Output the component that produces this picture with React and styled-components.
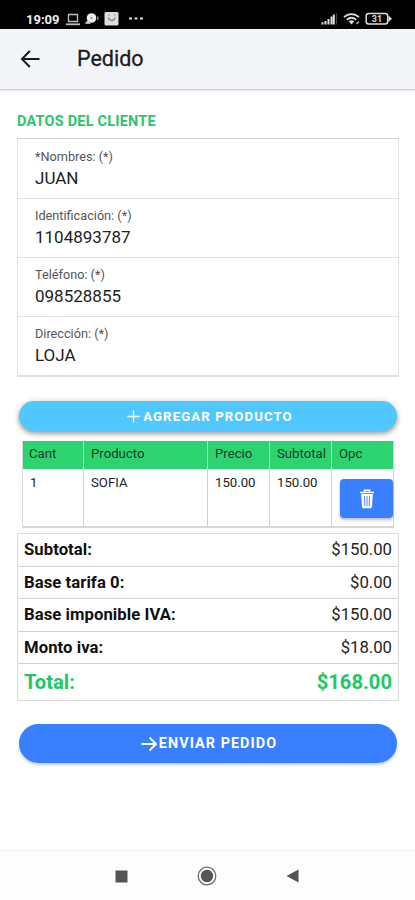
import React from 'react';
import styled, {createGlobalStyle} from 'styled-components';

const fields = [
	{label: '*Nombres: (*)', value: 'JUAN'},
	{label: 'Identificación: (*)', value: '1104893787'},
	{label: 'Teléfono: (*)', value: '098528855'},
	{label: 'Dirección: (*)', value: 'LOJA'},
];

const totals = [
	{label: 'Subtotal:', value: '$150.00'},
	{label: 'Base tarifa 0:', value: '$0.00'},
	{label: 'Base imponible IVA:', value: '$150.00'},
	{label: 'Monto iva:', value: '$18.00'},
];

const StatusBar = () => {
	return (
		<Status>
			<Clock>19:09</Clock>
			<svg width="81" height="16" viewBox="0 0 81 16">
				<path d="M2.5 2.5h9v7h-9z" fill="none" stroke="#bbb" strokeWidth="1.4" />
				<path d="M0 12.3h14" stroke="#bbb" strokeWidth="1.8" />
				<circle cx="25.5" cy="6" r="4.8" fill="#eee" />
				<circle cx="25.5" cy="6" r="1" fill="#777" />
				<path d="M22 8.5l-2.5 2.8h5" fill="#ccc" stroke="#ccc" />
				<path d="M31.8 4.5v3.5" stroke="#999" strokeWidth="1.3" />
				<rect x="38.5" y="0" width="14" height="13.5" rx="1.5" fill="#ddd" />
				<path d="M42 3h1.5M48 3h1.5" stroke="#888" />
				<path d="M42.5 5.5c.5 4 6 4 6.5 0" fill="none" stroke="#888" strokeWidth="1.4" />
				<path d="M63 6.5h3M68.5 6.5h3M74 6.5h3" stroke="#ddd" strokeWidth="2" />
			</svg>
			<Signals width="72" height="16" viewBox="0 0 72 16">
				<path d="M1.5 12.5V10.3M4.5 12.5V9M7.5 12.5V7M10.5 12.5V4.5M12.8 12.5V2.5" stroke="#ddd" strokeWidth="2" />
				<path d="M15.5 12.5V1" stroke="#444" strokeWidth="1" />
				<path d="M23 5.2c4.5-4.2 10.5-4.2 15 0M25.8 7.8c3-2.6 6.5-2.6 9.4 0" fill="none" stroke="#ddd" strokeWidth="1.8" />
				<path d="M27.8 9.3q2.7-2 5.4 0L30.5 12.6z" fill="#ddd" />
				<path d="M35.5 12l2.5-2.5" stroke="#bbb" strokeWidth="1.5" />
				<rect x="45.2" y="1.5" width="21.5" height="10.6" rx="2.5" fill="none" stroke="#ddd" strokeWidth="1.5" />
				<path d="M67.5 3.5l3.5 3.3-3.5 3.3z" fill="#ddd" />
				<text x="56" y="10" textAnchor="middle">31</text>
			</Signals>
		</Status>
	)
}

const App = () => {
	return (
		<Screen>
			<GlobalStyle />
			<StatusBar />
			<Header>
				<svg width="20" height="18" viewBox="0 0 20 18" fill="none" stroke="#15171a" strokeWidth="2">
					<path d="M9.8 1L2 9l7.8 8M2 9h17.5" />
				</svg>
				<Title>Pedido</Title>
			</Header>
			<Content>
				<SectionLabel>DATOS DEL CLIENTE</SectionLabel>
				<Client>
					{fields.map(field => (
						<Field key={field.label}>
							<FieldLabel>{field.label}</FieldLabel>
							<FieldValue>{field.value}</FieldValue>
						</Field>
					))}
				</Client>
				<AddButton>
					<svg width="13" height="13" viewBox="0 0 13 13" stroke="#fff" strokeWidth="1.3">
						<path d="M6.5 .5v12M.5 6.5h12" />
					</svg>
					AGREGAR PRODUCTO
				</AddButton>
				<Products>
					<Th>Cant</Th>
					<Th>Producto</Th>
					<Th>Precio</Th>
					<Th>Subtotal</Th>
					<Th>Opc</Th>
					<Td>1</Td>
					<Td>SOFIA</Td>
					<Td>150.00</Td>
					<Td>150.00</Td>
					<Td $action>
						<DeleteButton aria-label="Eliminar">
							<svg width="16" height="20" viewBox="0 0 16 20">
								<path d="M1 3.5h14M5.5 3V1.2h5V3" fill="none" stroke="#fff" strokeWidth="1.6" />
								<path d="M2.2 5h11.6l-.8 12.8q-.2 1.5-1.7 1.5H4.7q-1.5 0-1.7-1.5z" fill="#fff" />
								<path d="M5.5 7l.3 10M8 7v10M10.5 7l-.3 10" stroke="#3880ff" strokeWidth=".9" />
							</svg>
						</DeleteButton>
					</Td>
				</Products>
				<Totals>
					{totals.map(row => (
						<TotalRow key={row.label}>
							<strong>{row.label}</strong>
							<span>{row.value}</span>
						</TotalRow>
					))}
					<GrandTotal>
						<span>Total:</span>
						<span>$168.00</span>
					</GrandTotal>
				</Totals>
				<SendButton>
					<svg width="16" height="16" viewBox="0 0 16 16" fill="none" stroke="#fff" strokeWidth="2">
						<path d="M8.5 1.5L15 8l-6.500 6.5M15 8H.5" />
					</svg>
					ENVIAR PEDIDO
				</SendButton>
			</Content>
			<NavBar>
				<svg width="13" height="13" viewBox="0 0 13 13">
					<path d="M.5 .5h12v12H.5z" fill="#555" />
				</svg>
				<svg width="20" height="20" viewBox="0 0 20 20">
					<circle cx="10" cy="10" r="8.8" fill="none" stroke="#666" strokeWidth="1.2" />
					<circle cx="10" cy="10" r="6.2" fill="#555" />
				</svg>
				<svg width="13" height="14" viewBox="0 0 13 14">
					<path d="M12.5 .5v13L.5 7z" fill="#555" />
				</svg>
			</NavBar>
		</Screen>
	)
}


const GlobalStyle = createGlobalStyle`
	* {
		box-sizing: border-box;
	}
	body {
		margin: 0;
		background: #fff;
		color: #222;
		font-family: Roboto, "Liberation Sans", sans-serif;
	}
	svg {
		display: block;
		flex-shrink: 0;
	}
`

const Screen = styled.div`
	display: flex;
	flex-direction: column;
	width: 415px;
	height: 900px;
	overflow: hidden;
`

const Status = styled.div`
	display: flex;
	align-items: flex-start;
	height: 29px;
	padding: 12px 22px 0 26px;
	background: #000;
`

const Clock = styled.span`
	width: 40px;
	color: #eee;
	font-size: 13px;
	font-weight: 700;
	line-height: 15px;
`

const Signals = styled.svg`
	margin-left: auto;
	text {
		fill: #ddd;
		font-size: 9px;
		font-weight: 700;
	}
`

const Header = styled.header`
	display: flex;
	align-items: center;
	gap: 37px;
	height: 61px;
	padding-left: 20px;
	background: #f4f5f9;
	border-bottom: 1px solid #cfcfd2;
	box-shadow: 0 1px 2px #0000001c;
`

const Title = styled.h1`
	margin: 0;
	padding-bottom: 2px;
	color: #1c1d20;
	font-size: 21.5px;
	font-weight: 400;
	-webkit-text-stroke: 0.3px #1c1d20;
`

const Content = styled.main`
	display: flex;
	flex: 1;
	flex-direction: column;
	padding: 23px 16px 0 17px;
`

const SectionLabel = styled.h2`
	margin: 0;
	height: 25px;
	color: #2dc56b;
	font-size: 14.5px;
	font-weight: 700;
	letter-spacing: 0.2px;
	line-height: 17px;
`

const Client = styled.div`
	height: 239px;
	border: 1px solid #e0e0e0;
	border-top-color: #d4d4d4;
	border-bottom-width: 2px;
`

const Field = styled.div`
	height: 59px;
	padding: 9px 17px 0;
	& + & {
		border-top: 1px solid #e4e4e4;
		padding-top: 8px;
	}
`

const FieldLabel = styled.div`
	color: #555;
	font-size: 12.7px;
	line-height: 17px;
`

const FieldValue = styled.div`
	font-size: 17px;
	line-height: 26px;
`

const Button = styled.button`
	display: flex;
	align-items: center;
	justify-content: center;
	margin: 0 2px 0 2px;
	border: 0;
	border-radius: 20px;
	color: #fff;
	font-family: inherit;
	font-weight: 700;
`

const AddButton = styled(Button)`
	gap: 3px;
	height: 30px;
	margin-top: 24px;
	padding: 0 4px 0 8px;
	background: #50c8ff;
	box-shadow: 0 3px 5px #0005, 0 0 7px #0002;
	font-size: 13.2px;
	letter-spacing: 1.1px;
`

const Products = styled.div`
	display: grid;
	grid-template-columns: 61px 124px 62px 62px 62px;
	grid-template-rows: 28px 59px;
	width: 372px;
	margin: 10px 0 0 5px;
	border-left: 1px solid #d8d8d8;
`

const Th = styled.div`
	padding: 5px 0 0 7px;
	background: #2dd36f;
	border-right: 1px solid #c9dccf;
	color: #203c2a;
	font-size: 13.2px;
	line-height: 16px;
	&:first-child {
		padding-left: 6px;
	}
`

const Td = styled.div`
	padding: ${props => props.$action ? '10px 0 0 8px' : '6px 0 0 7px'};
	border-right: 1px solid #d0d0d0;
	border-bottom: 2px solid #d8d8d8;
	font-size: 13.2px;
	line-height: 16px;
`

const DeleteButton = styled(Button)`
	width: 53px;
	height: 39px;
	margin: 0;
	padding: 0;
	border-radius: 4px;
	background: #3880ff;
	box-shadow: 0 2px 3px #0004;
`

const Totals = styled.div`
	margin-top: 5px;
	border: 1px solid #dcdcdc;
`

const TotalRow = styled.div`
	display: flex;
	align-items: center;
	justify-content: space-between;
	height: 32.5px;
	padding: 0 6px;
	border-bottom: 1px solid #d3d3d3;
	font-size: 16.7px;
	strong {
		color: #111;
		font-size: 16.7px;
		font-weight: 700;
		letter-spacing: 0.05px;
	}
`

const GrandTotal = styled(TotalRow)`
	height: 36px;
	border: 0;
	color: #1fc765;
	font-size: 20.2px;
	font-weight: 700;
`

const SendButton = styled(Button)`
	gap: 2px;
	height: 39px;
	margin-top: 23px;
	padding: 0 4px 0 6px;
	background: #3880ff;
	box-shadow: 0 2px 3px #0003;
	font-size: 14.4px;
	letter-spacing: 1.050px;
`

const NavBar = styled.nav`
	display: flex;
	align-items: center;
	justify-content: space-between;
	height: 50px;
	padding: 1px 116px 0 115px;
	border-top: 1px solid #f0f0f0;
	background: #fdfdfd;
`

export default App;
